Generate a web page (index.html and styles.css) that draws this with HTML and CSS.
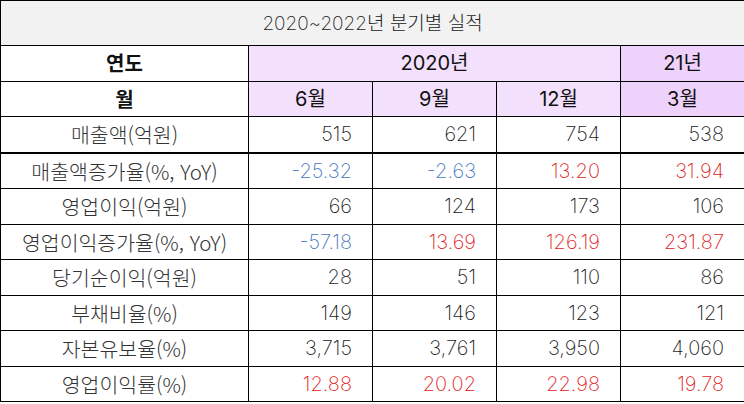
FILE: index.html
```html
<!DOCTYPE html>
<html lang="ko">
<head>
<meta charset="utf-8">
<link rel="stylesheet" href="styles.css">
</head>
<body>
<table class="perf">
  <colgroup>
    <col class="c-label">
    <col class="c-val">
    <col class="c-val">
    <col class="c-val">
    <col class="c-val">
  </colgroup>
  <tr class="title-row"><td colspan="5" class="title">2020~2022년 분기별 실적</td></tr>
  <tr class="head">
    <th class="hlabel">연도</th>
    <th colspan="3" class="y20">2020년</th>
    <th class="y21">21년</th>
  </tr>
  <tr class="head">
    <th class="hlabel">월</th>
    <th class="y20">6월</th>
    <th class="y20">9월</th>
    <th class="y20">12월</th>
    <th class="y21">3월</th>
  </tr>
  <tr class="sep">
    <td class="label">매출액(억원)</td><td class="num">515</td><td class="num">621</td><td class="num">754</td><td class="num">538</td>
  </tr>
  <tr>
    <td class="label">매출액증가율(%, YoY)</td><td class="num neg">-25.32</td><td class="num neg">-2.63</td><td class="num pos">13.20</td><td class="num pos">31.94</td>
  </tr>
  <tr>
    <td class="label">영업이익(억원)</td><td class="num">66</td><td class="num">124</td><td class="num">173</td><td class="num">106</td>
  </tr>
  <tr>
    <td class="label">영업이익증가율(%, YoY)</td><td class="num neg">-57.18</td><td class="num pos">13.69</td><td class="num pos">126.19</td><td class="num pos">231.87</td>
  </tr>
  <tr>
    <td class="label">당기순이익(억원)</td><td class="num">28</td><td class="num">51</td><td class="num">110</td><td class="num">86</td>
  </tr>
  <tr>
    <td class="label">부채비율(%)</td><td class="num">149</td><td class="num">146</td><td class="num">123</td><td class="num">121</td>
  </tr>
  <tr>
    <td class="label">자본유보율(%)</td><td class="num">3,715</td><td class="num">3,761</td><td class="num">3,950</td><td class="num">4,060</td>
  </tr>
  <tr>
    <td class="label">영업이익률(%)</td><td class="num pos">12.88</td><td class="num pos">20.02</td><td class="num pos">22.98</td><td class="num pos">19.78</td>
  </tr>
</table>
</body>
</html>
```
FILE: styles.css
```css
html, body {
  margin: 0;
  padding: 0;
  background: #ffffff;
}
.perf {
  border-collapse: collapse;
  table-layout: fixed;
  width: 743px;
  font-family: "Inter", "Noto Sans CJK KR", sans-serif;
  font-weight: 250;
  color: #1a1a1a;
}
.c-label { width: 248px; }
.c-val { width: 124px; }
.perf td, .perf th {
  border: 1px solid #000;
  padding: 0;
  height: 34.5px;
  font-size: 20px;
  line-height: 1;
  font-weight: 250;
}
.perf .title {
  height: 44px;
  background: #f2f2f2;
  text-align: center;
  font-size: 19px;
  color: #222;
}
.head th {
  text-align: center;
  font-weight: 400;
  color: #111;
}
.head .hlabel {
  background: #fff;
  font-family: "Noto Sans CJK KR", sans-serif;
  font-weight: 700;
  font-size: 20px;
}
.y20 { background: #f3e0fc; }
.y21 { background: #eed2fb; }
.label {
  text-align: center;
  color: #333;
  font-family: "Noto Sans CJK KR", sans-serif;
  font-weight: 300 !important;
  font-size: 20.5px !important;
}
.num {
  text-align: right;
  padding-right: 20px !important;
  color: #1a1a1a;
}
.sep td { border-bottom: 2px solid #000; }
.neg { color: #4477c0 !important; }
.pos { color: #e01b24 !important; }
```
